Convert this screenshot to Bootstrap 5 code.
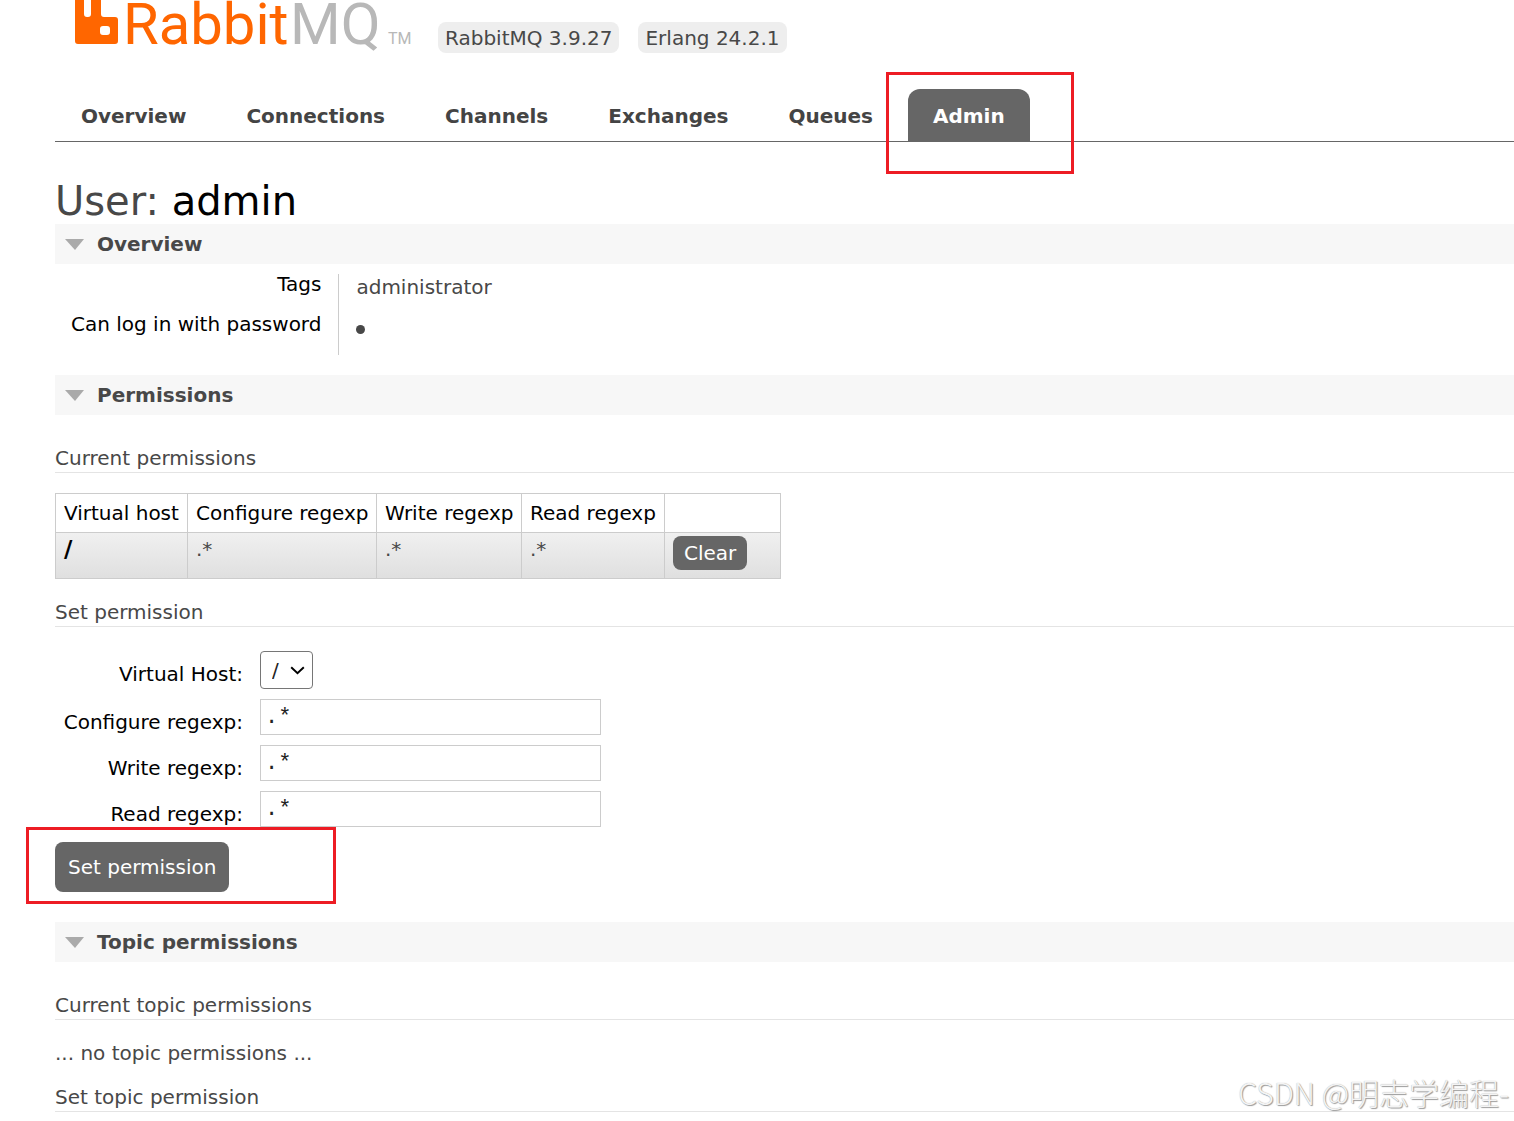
<!DOCTYPE html>
<html lang="en">
<head>
<meta charset="utf-8">
<meta name="viewport" content="width=device-width, initial-scale=1">
<title>RabbitMQ Management</title>
<link href="https://cdn.jsdelivr.net/npm/bootstrap@5.3.0/dist/css/bootstrap.min.css" rel="stylesheet">
<style>
body{font-family:"DejaVu Sans",Verdana,sans-serif;font-size:20px;line-height:26px;color:#484848;background:#fff;overflow-x:hidden}
.page-wrap{padding-left:55px;min-height:100vh;overflow:hidden}
.site-head{height:52px;padding-left:18px}
.brand-logo{width:346px;height:58px;display:block}
.brand-logo text{font-family:Roboto,"Liberation Sans",sans-serif}
.versions{gap:19px;padding:22px 0 0 19px}
.version{background:#eee;border-radius:8px;padding:3px 7px;line-height:26px;height:31px}
.tabs-row{margin-top:37px;padding-left:1px;border-bottom:1px solid #666;gap:10px}
.tabs-row .nav-link{color:#444;font-weight:700;padding:14px 25px 12px;border-radius:12px 12px 0 0;line-height:26px}
.tabs-row .nav-link.active{background:#666;color:#fff}
.page-title{font-size:40px;line-height:46px;margin:36px 0 0;font-weight:400}
.page-title b{font-weight:400;color:#000}
.section-bar{background:#f7f7f7;font-size:20px;line-height:26px;font-weight:700;padding:7px 10px;margin:0;gap:13px}
.section-bar svg{width:19px;height:11px}
.sub-title{font-size:20px;line-height:24px;font-weight:400;border-bottom:1px solid #e4e4e4;padding-bottom:2px;margin:31px 0 20px}
.sub-title.tight{margin-top:19px}
.facts{margin:10px 0 20px}
.facts th,.facts td{height:40px;vertical-align:top;padding:0 17px}
.facts th{font-weight:400;color:#000;text-align:right;line-height:20px;border-right:1px solid #ccc;padding-left:16px}
.facts td{line-height:26px}
.facts tr:last-child th{height:41px}
.dot{width:9px;height:9px;border-radius:50%;background:#484848;display:inline-block}
.perm-table{border-collapse:collapse;width:726px;table-layout:fixed;margin-bottom:21px}
.perm-table th,.perm-table td{border:1px solid #ccc;padding:3px 8px;vertical-align:top;white-space:nowrap}
.perm-table th{font-weight:400;color:#000;padding:6px 8px}
.perm-table tbody tr{background:linear-gradient(#f0f0f0,#dfdfdf)}
.perm-table tbody td{height:46px}
.perm-table .vhost{color:#000;font-weight:700;font-size:23px}
.act{background:#666;color:#fff;border:0;border-radius:8px;font-size:20px}
.act:hover{background:#f60;color:#fff}
.act-clear{padding:4px 11px;line-height:26px}
.act-set{padding:12px 13px;line-height:26px}
.perm-form{padding-top:4px}
.perm-form label{width:188px;text-align:right;color:#000;white-space:nowrap;padding-top:10px}
.form-line{gap:17px;min-height:46px}
.form-line:first-child{min-height:48px}
.set-line{margin:5px 0 30px}
.vhost-pick{width:53px;height:38px;border:1px solid #767676;border-radius:4px;padding:0 0 0 11px;font-size:20px;color:#222;appearance:none;background:#fff url("data:image/svg+xml,%3Csvg xmlns='http://www.w3.org/2000/svg' viewBox='0 0 16 10'%3E%3Cpath d='M1 1.5 8 8l7-6.500' fill='none' stroke='%23000' stroke-width='2.200'/%3E%3C/svg%3E") no-repeat 29px 14px/15px 9px}
.rx{width:341px;height:36px;border:1px solid #ccc;padding:0 4px;font-family:"Liberation Mono",monospace;font-size:22px;color:#222}
.mark-box{position:absolute;border:3px solid #ed1c24;pointer-events:none}
.mark-tab{left:-22px;top:-17px;width:188px;height:102px}
.mark-set{left:-29px;top:-15px;width:310px;height:77px}
.watermark{position:absolute;right:5px;top:1074px;font-family:"Noto Sans CJK SC",sans-serif;font-weight:300;font-size:30px;line-height:36px;color:#f4f4f4;text-shadow:1px 1px 1px #999,0 0 1px #aaa;white-space:nowrap}
</style>
</head>
<body class="position-relative">
<div class="page-wrap">
  <header class="site-head d-flex">
    <a href="#" aria-label="RabbitMQ"><svg class="brand-logo" viewBox="0 0 346 58" overflow="visible">
      <path fill="#f60" d="M2 -4H11V14Q11 17 14 17H15Q18 17 18 14V-4H28V14Q28 17 31 17H42Q45 17 45 20V41Q45 44 42 44H5Q2 44 2 41ZM30 26Q27 26 27 29V32Q27 35 30 35H34Q37 35 37 32V29Q37 26 34 26Z" fill-rule="evenodd"/>
      <text x="50" y="44" font-size="58" fill="#f60">Rabbit</text>
      <text x="217" y="44" font-size="58" fill="#b8b8b8">MQ</text>
      <text x="315" y="44" font-size="16" fill="#b8b8b8">TM</text>
    </svg></a>
    <div class="d-flex versions">
      <span class="version">RabbitMQ 3.9.27</span>
      <span class="version">Erlang 24.2.1</span>
    </div>
  </header>
  <nav>
    <ul class="nav tabs-row flex-nowrap">
      <li><a class="nav-link" href="#">Overview</a></li>
      <li><a class="nav-link" href="#">Connections</a></li>
      <li><a class="nav-link" href="#">Channels</a></li>
      <li><a class="nav-link" href="#">Exchanges</a></li>
      <li><a class="nav-link" href="#">Queues</a></li>
      <li class="position-relative"><a class="nav-link active" aria-current="page" href="#">Admin</a><span class="mark-box mark-tab"></span></li>
    </ul>
  </nav>
  <main>
    <h1 class="page-title">User: <b>admin</b></h1>

    <h2 class="section-bar d-flex align-items-center"><svg viewBox="0 0 19 11"><path d="M0 0H19L10 11Z" fill="#aaa"/></svg>Overview</h2>
    <table class="facts">
      <tr><th scope="row">Tags</th><td>administrator</td></tr>
      <tr><th scope="row">Can log in with password</th><td><span class="dot"></span></td></tr>
    </table>

    <h2 class="section-bar d-flex align-items-center"><svg viewBox="0 0 19 11"><path d="M0 0H19L10 11Z" fill="#aaa"/></svg>Permissions</h2>
    <h3 class="sub-title">Current permissions</h3>
    <table class="perm-table">
      <colgroup><col style="width:132px"><col style="width:189px"><col style="width:145px"><col style="width:143px"><col></colgroup>
      <thead><tr><th scope="col">Virtual host</th><th scope="col">Configure regexp</th><th scope="col">Write regexp</th><th scope="col">Read regexp</th><th></th></tr></thead>
      <tbody><tr><td class="vhost">/</td><td>.*</td><td>.*</td><td>.*</td><td><button type="button" class="act act-clear">Clear</button></td></tr></tbody>
    </table>
    <h3 class="sub-title tight">Set permission</h3>
    <form class="perm-form">
      <div class="form-line d-flex"><label for="vh">Virtual Host:</label><select id="vh" class="vhost-pick"><option>/</option></select></div>
      <div class="form-line d-flex"><label for="cf">Configure regexp:</label><input id="cf" class="rx" type="text" value=".*"></div>
      <div class="form-line d-flex"><label for="wr">Write regexp:</label><input id="wr" class="rx" type="text" value=".*"></div>
      <div class="form-line d-flex"><label for="rd">Read regexp:</label><input id="rd" class="rx" type="text" value=".*"></div>
      <div class="position-relative set-line"><button type="button" class="act act-set d-block">Set permission</button><span class="mark-box mark-set"></span></div>
    </form>

    <h2 class="section-bar d-flex align-items-center"><svg viewBox="0 0 19 11"><path d="M0 0H19L10 11Z" fill="#aaa"/></svg>Topic permissions</h2>
    <h3 class="sub-title">Current topic permissions</h3>
    <p class="m-0">... no topic permissions ...</p>
    <h3 class="sub-title tight mb-0">Set topic permission</h3>
  </main>
</div>
<div class="watermark">CSDN @明志学编程-</div>
<script src="https://cdn.jsdelivr.net/npm/bootstrap@5.3.0/dist/js/bootstrap.bundle.min.js"></script>
</body>
</html>
